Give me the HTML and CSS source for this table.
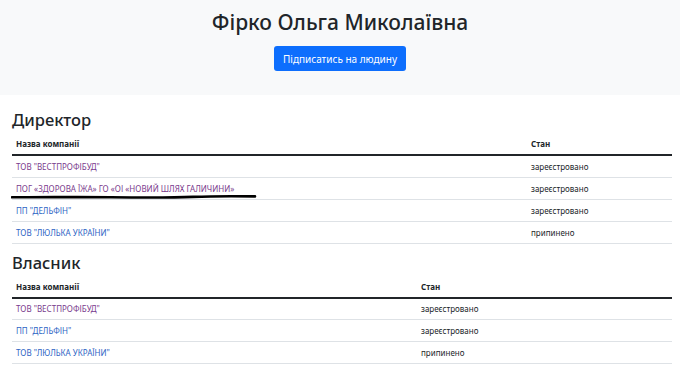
FILE: index.html
```html
<!DOCTYPE html>
<html lang="uk">
<head>
<meta charset="utf-8">
<title>Фірко Ольга Миколаївна</title>
<link rel="stylesheet" href="styles.css">
</head>
<body>
<header class="hero">
  <h1 class="hero-title">Фірко Ольга Миколаївна</h1>
  <button class="btn-primary" type="button">Підписатись на людину</button>
</header>
<main class="content">
  <h2 class="section-title">Директор</h2>
  <table class="data-table">
    <colgroup><col class="col-name-wide"><col></colgroup>
    <thead>
      <tr><th>Назва компанії</th><th>Стан</th></tr>
    </thead>
    <tbody>
      <tr><td><a class="link visited" href="#">ТОВ "ВЕСТПРОФІБУД"</a></td><td>зареєстровано</td></tr>
      <tr><td class="marked"><a class="link visited" href="#">ПОГ «ЗДОРОВА ЇЖА» ГО «ОІ «НОВИЙ ШЛЯХ ГАЛИЧИНИ»</a>
        <svg class="pen-mark" width="250" height="6" viewBox="0 0 250 6"><path d="M1 4.2 C 40 4.4, 60 3.8, 100 4.3 S 170 4.4, 182 3.9 S 230 3.2, 244 3.4" fill="none" stroke="#000" stroke-width="2.6" stroke-linecap="round"/></svg>
      </td><td>зареєстровано</td></tr>
      <tr><td><a class="link" href="#">ПП "ДЕЛЬФІН"</a></td><td>зареєстровано</td></tr>
      <tr><td><a class="link" href="#">ТОВ "ЛЮЛЬКА УКРАЇНИ"</a></td><td>припинено</td></tr>
    </tbody>
  </table>
  <h2 class="section-title">Власник</h2>
  <table class="data-table">
    <colgroup><col class="col-name-narrow"><col></colgroup>
    <thead>
      <tr><th>Назва компанії</th><th>Стан</th></tr>
    </thead>
    <tbody>
      <tr><td><a class="link visited" href="#">ТОВ "ВЕСТПРОФІБУД"</a></td><td>зареєстровано</td></tr>
      <tr><td><a class="link" href="#">ПП "ДЕЛЬФІН"</a></td><td>зареєстровано</td></tr>
      <tr><td><a class="link" href="#">ТОВ "ЛЮЛЬКА УКРАЇНИ"</a></td><td>припинено</td></tr>
    </tbody>
  </table>
</main>
</body>
</html>
```

FILE: styles.css
```css
* { box-sizing: border-box; }
html, body { margin: 0; padding: 0; }
body {
  font-family: "Noto Sans", "Open Sans", sans-serif;
  color: #212529;
  background: #fff;
}
.hero {
  background: #f8f9fa;
  height: 95px;
  display: flex;
  flex-direction: column;
  align-items: center;
  padding-top: 7px;
}
.hero-title {
  margin: 0;
  font-size: 21px;
  font-weight: 500;
  line-height: 30px;
}
.btn-primary {
  margin-top: 9px;
  height: 25px;
  width: 132px;
  background: #0d6efd;
  color: #fff;
  border: 0;
  border-radius: 3px;
  font-family: inherit;
  font-size: 10px;
  padding: 0;
}
.content {
  padding: 6px 8px 0 12px;
}
.section-title {
  margin: 0;
  padding-top: 6px;
  font-size: 16.5px;
  line-height: 26px;
  font-weight: 500;
}
.data-table {
  width: 660px;
  border-collapse: collapse;
  table-layout: fixed;
  font-size: 8px;
}
.col-name-wide { width: 515px; }
.col-name-narrow { width: 405px; }
.data-table th {
  text-align: left;
  font-weight: 700;
  height: 22px;
  padding: 0 4px;
  border-bottom: 2px solid #212529;
}
.data-table td {
  height: 22px;
  padding: 0 4px;
  border-bottom: 1px solid #dee2e6;
}
.link { text-decoration: none; color: #2d64c4; }
.link.visited { color: #7a3b8d; }
.marked { position: relative; }
.pen-mark {
  position: absolute;
  left: -1px;
  top: 15px;
}
```
